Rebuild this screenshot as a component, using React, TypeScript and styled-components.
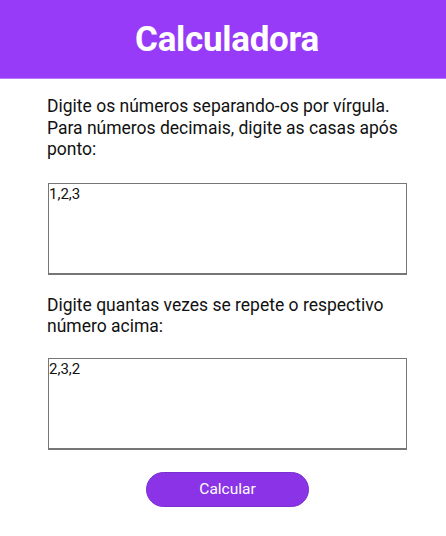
import React from "react";
import styled, { createGlobalStyle } from "styled-components";

const Global = createGlobalStyle`
  html, body { margin: 0; padding: 0; background: #fff; }
  body { font-family: Roboto, "Liberation Sans", sans-serif; }
`;

const Header = styled.header`
  height: 78px;
  background: #983bf8;
  border-bottom: 1px solid #b57bf6;
  display: flex;
  align-items: center;
  justify-content: center;
`;

const Title = styled.h1`
  margin: 0;
  color: #fff;
  font-size: 35px;
  font-weight: 700;
  letter-spacing: -0.3px;
  padding-left: 8px;
`;

const Main = styled.main`
  width: 360px;
  margin-left: 47px;
  padding-top: 17px;
  display: flex;
  flex-direction: column;
`;

const Label = styled.p<{ $gap: number }>`
  margin: 0 0 ${(p) => p.$gap}px 0;
  font-size: 17.5px;
  line-height: 21.5px;
  color: #111;
`;

const Field = styled.textarea`
  box-sizing: border-box;
  width: 359px;
  height: 92px;
  margin: 0 0 0 1px;
  padding: 1px 0 0 0;
  border: 1px solid #767676;
  border-bottom-width: 2px;
  border-right-width: 1px;
  font-family: Roboto, "Liberation Sans", sans-serif;
  font-size: 15px;
  color: #111;
  resize: none;
  outline: none;
`;

const Spacer = styled.div<{ $h: number }>`
  height: ${(p) => p.$h}px;
`;

const Button = styled.button`
  align-self: center;
  width: 163px;
  height: 35px;
  margin-left: 1px;
  border: 1px solid #7a2fd0;
  border-radius: 18px;
  background: #8b34e7;
  color: #fff;
  font-family: Roboto, "Liberation Sans", sans-serif;
  font-size: 15.5px;
`;

export default function App() {
  return (
    <>
      <Global />
      <Header>
        <Title>Calculadora</Title>
      </Header>
      <Main>
        <Label $gap={22}>
          Digite os números separando-os por vírgula. Para números decimais, digite as casas após ponto:
        </Label>
        <Field defaultValue="1,2,3" />
        <Spacer $h={20} />
        <Label $gap={20}>Digite quantas vezes se repete o respectivo número acima:</Label>
        <Field defaultValue="2,3,2" />
        <Spacer $h={22} />
        <Button>Calcular</Button>
      </Main>
    </>
  );
}
